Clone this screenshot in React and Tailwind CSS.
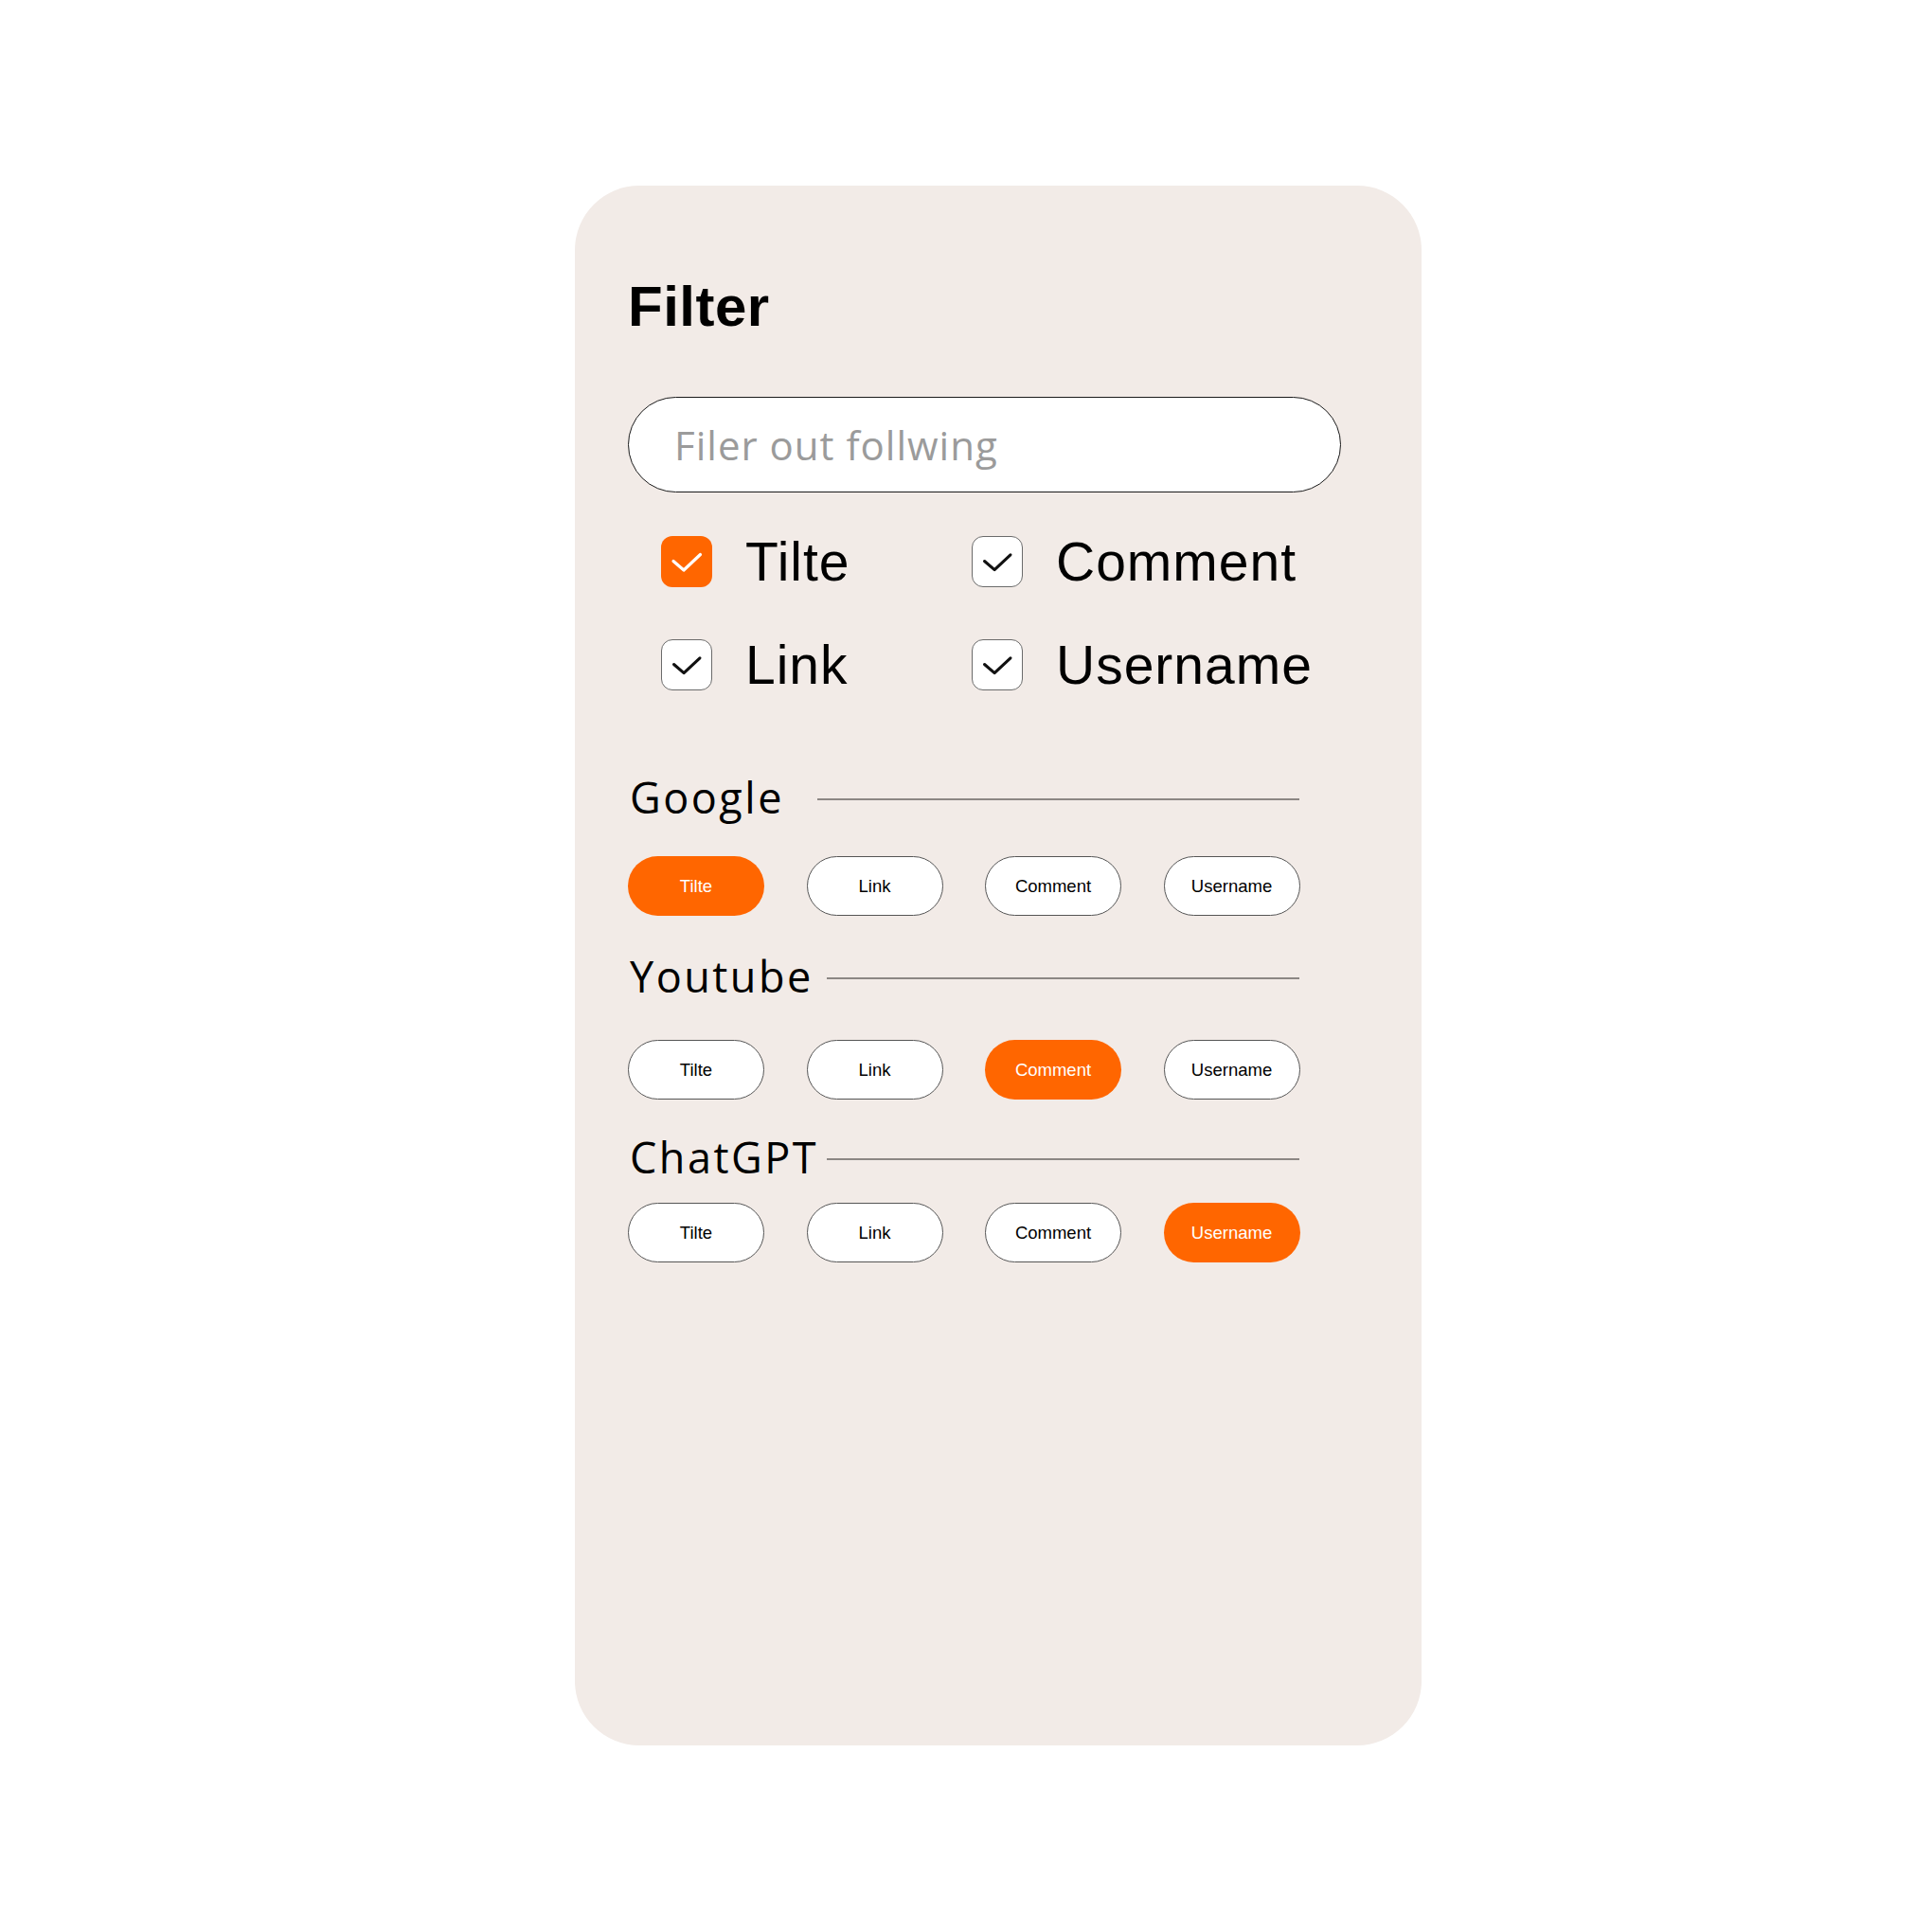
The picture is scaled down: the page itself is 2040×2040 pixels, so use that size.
import React from "react";

const Check = ({ color }) => (
  <svg width="54" height="54" viewBox="0 0 54 54" className="block">
    <polyline
      points="13,26.5 24,36 41.5,19.5"
      fill="none"
      stroke={color}
      strokeWidth="3.2"
      strokeLinecap="round"
      strokeLinejoin="round"
    />
  </svg>
);

function CheckItem({ label, checked }) {
  return (
    <div className="flex items-center gap-[35px]">
      {checked ? (
        <div className="w-[54px] h-[54px] rounded-[12px] bg-[#ff6600] flex items-center justify-center">
          <Check color="#ffffff" />
        </div>
      ) : (
        <div className="w-[54px] h-[54px] rounded-[12px] bg-white border-[1.5px] border-[#6b6b6b] flex items-center justify-center">
          <Check color="#111111" />
        </div>
      )}
      <span className="text-[57px] leading-[56px] tracking-[1px] text-black font-['Liberation_Sans',Arial,sans-serif]">
        {label}
      </span>
    </div>
  );
}

function Pill({ label, active }) {
  return active ? (
    <div className="w-[144px] h-[63px] rounded-full bg-[#ff6600] flex items-center justify-center text-white text-[18.5px] font-['Liberation_Sans',Arial,sans-serif]">
      {label}
    </div>
  ) : (
    <div className="w-[144px] h-[63px] rounded-full bg-white border-[1.5px] border-[#555555] flex items-center justify-center text-black text-[18.5px] font-['Liberation_Sans',Arial,sans-serif]">
      {label}
    </div>
  );
}

function Section({ title, active, lineGap, mt, pillsMt }) {
  const items = ["Tilte", "Link", "Comment", "Username"];
  return (
    <div className={mt}>
      <div className="flex items-center ml-[2px] w-[707px]">
        <span className="text-[45px] leading-[45px] tracking-[2.5px] text-black font-['Open_Sans','Noto_Sans',sans-serif]">
          {title}
        </span>
        <div className={`flex-1 h-[2px] bg-[#8c8784] mt-[4px] ${lineGap}`} />
      </div>
      <div className={`flex gap-[44.5px] ${pillsMt}`}>
        {items.map((it) => (
          <Pill key={it} label={it} active={it === active} />
        ))}
      </div>
    </div>
  );
}

export default function App() {
  return (
    <div className="min-h-[2040px] bg-white pt-[196px] pl-[607px]">
      <div className="w-[894px] h-[1647px] rounded-[68px] bg-[#f2ebe7] pt-[98px] pl-[56px]">
        <h1 className="text-[60px] leading-[59px] tracking-[0.5px] font-bold text-black font-['Liberation_Sans',Arial,sans-serif]">
          Filter
        </h1>
        <div className="mt-[66px] w-[753px] h-[101px] rounded-full bg-white border-[1.5px] border-[#1a1a1a] flex items-center pl-[48px]">
          <input
            type="text"
            placeholder="Filer out follwing"
            className="w-full bg-transparent outline-none text-[42px] tracking-[1px] text-black placeholder:text-[#9b9b9b] font-['Open_Sans','Noto_Sans',sans-serif]"
          />
        </div>
        <div className="mt-[45px] ml-[35px] grid grid-cols-[328px_auto] gap-y-[53px]">
          <CheckItem label="Tilte" checked />
          <CheckItem label="Comment" />
          <CheckItem label="Link" />
          <CheckItem label="Username" />
        </div>
        <Section title="Google" active="Tilte" lineGap="ml-[35px]" mt="mt-[89px]" pillsMt="mt-[40px]" />
        <Section title="Youtube" active="Comment" lineGap="ml-[14px]" mt="mt-[41px]" pillsMt="mt-[45px]" />
        <Section title="ChatGPT" active="Username" lineGap="ml-[9px]" mt="mt-[38px]" pillsMt="mt-[26px]" />
      </div>
    </div>
  );
}
